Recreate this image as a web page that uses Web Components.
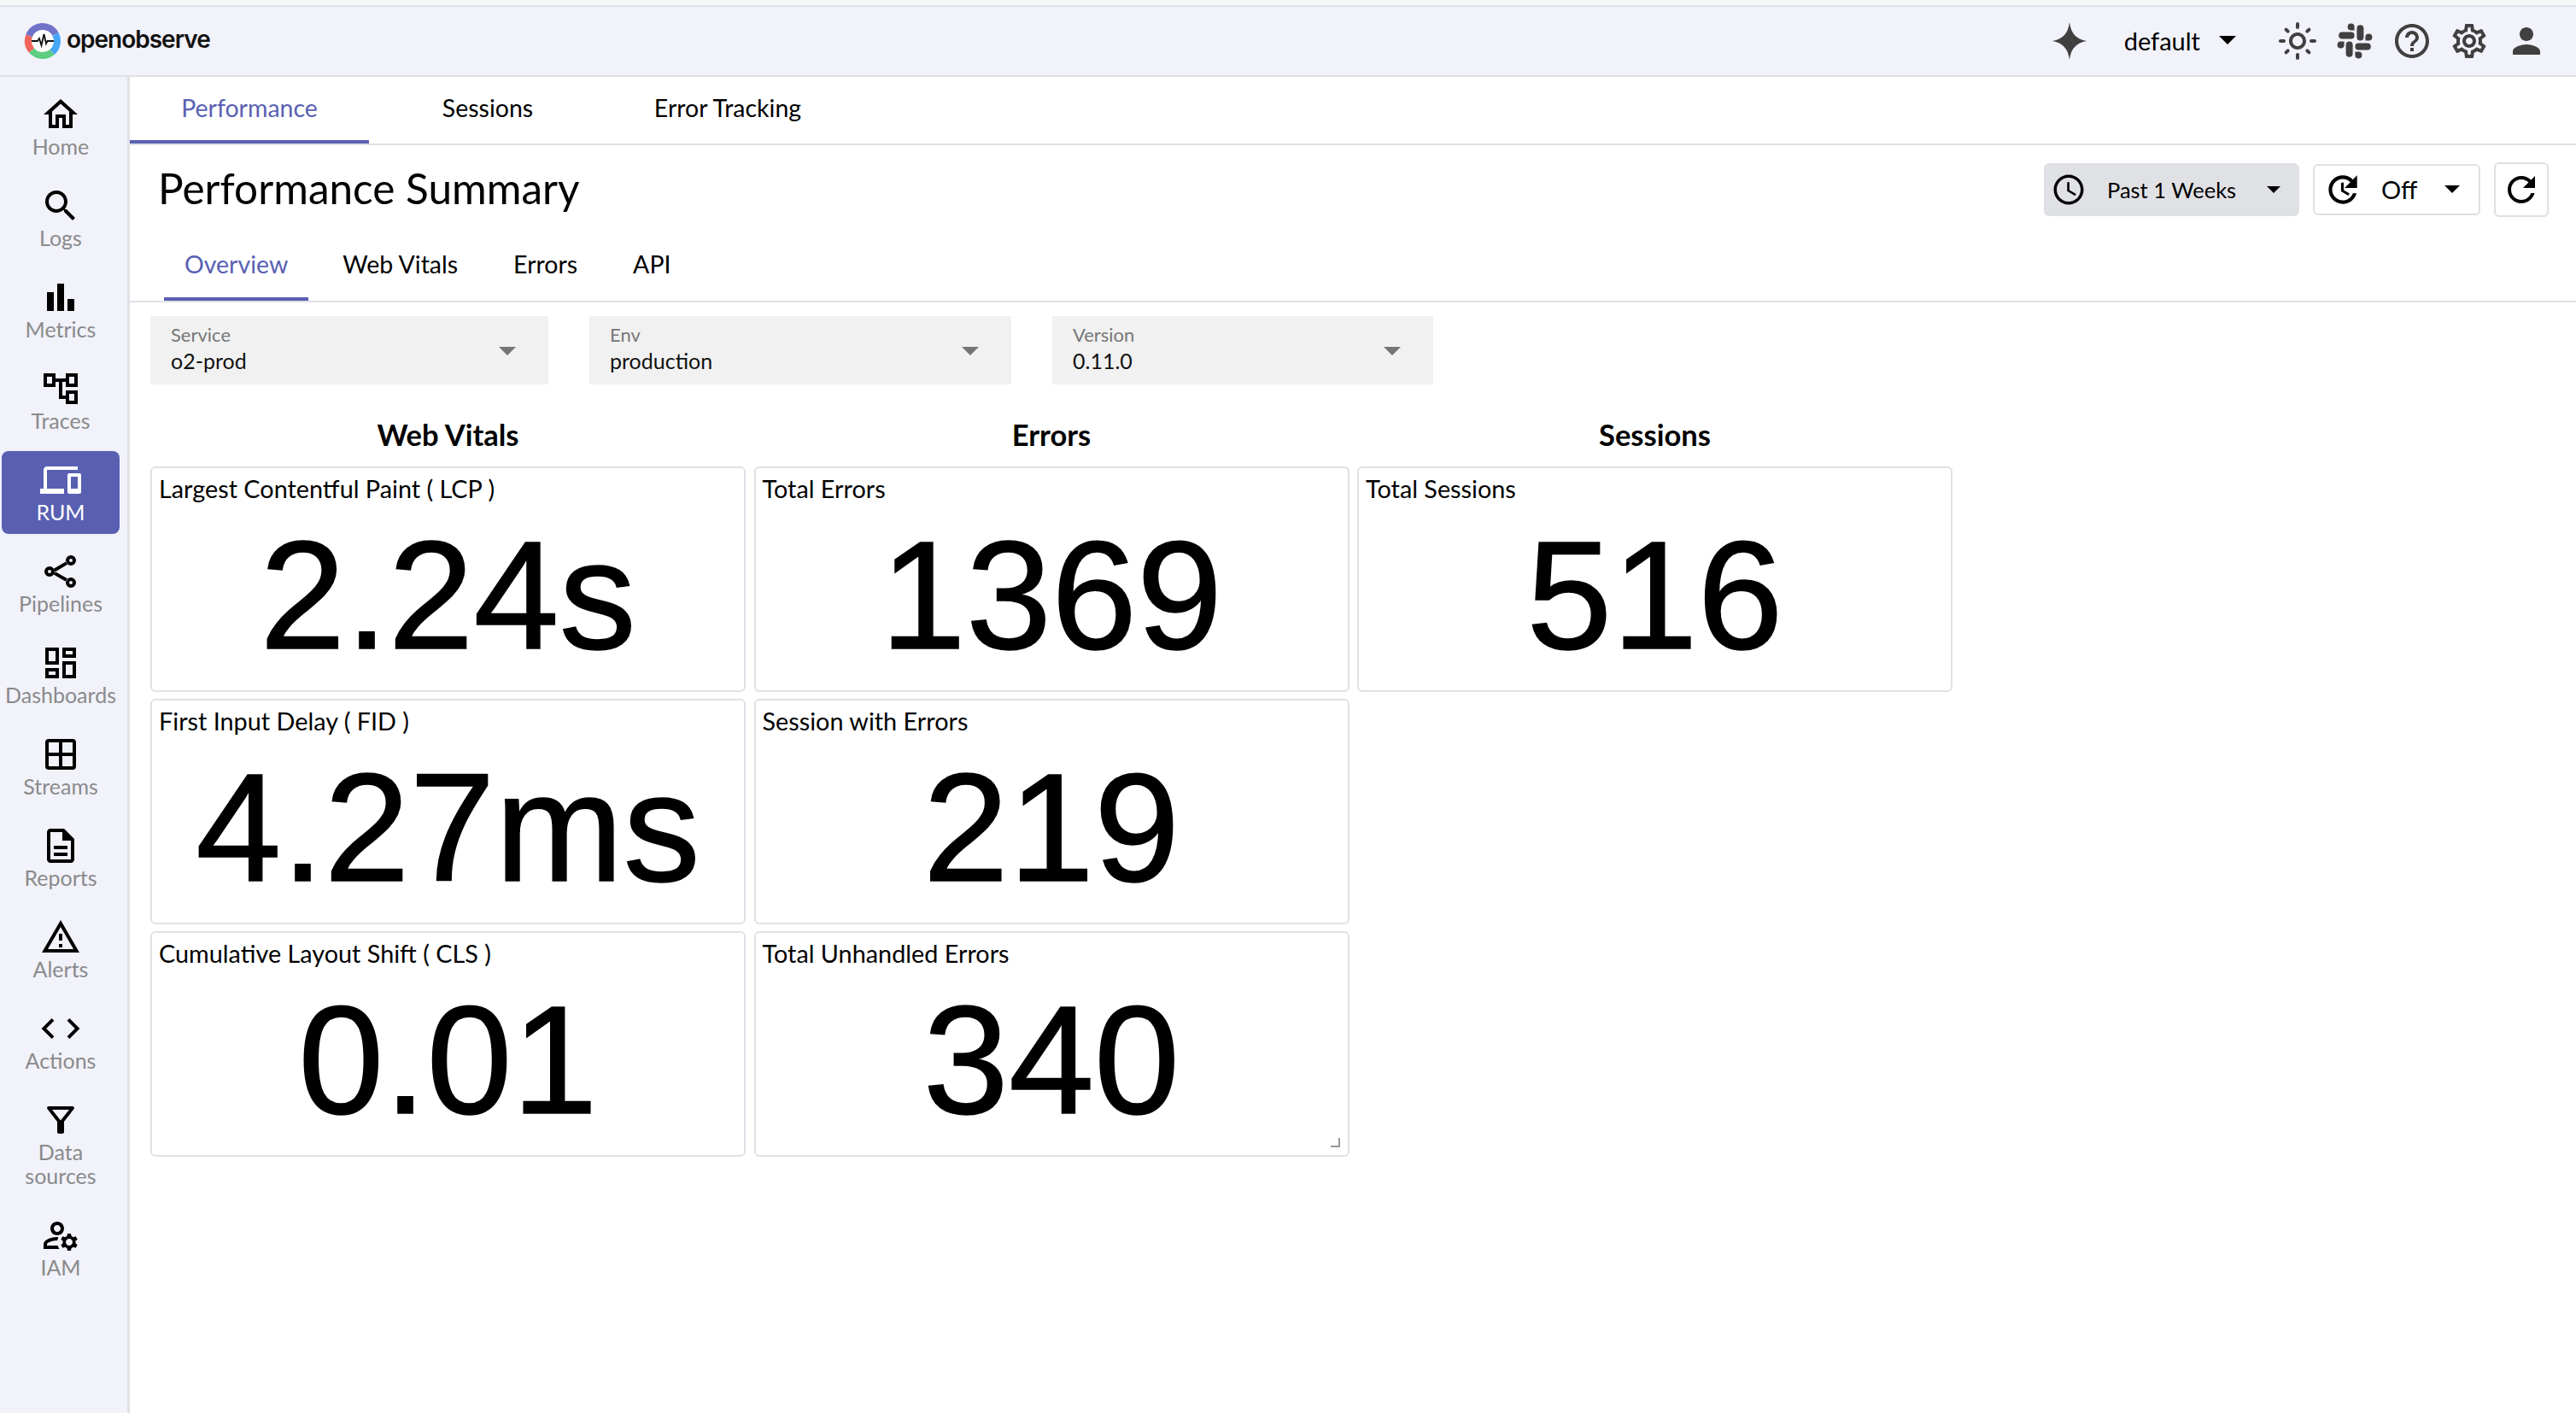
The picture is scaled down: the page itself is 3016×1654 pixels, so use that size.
<!DOCTYPE html>
<html><head><meta charset="utf-8"><title>OpenObserve</title>
<style>
html,body{margin:0;padding:0;background:#fff;}
body{font-family:"Lato","Noto Sans",sans-serif;color:#000;}
</style></head><body>
<oo-app></oo-app>
<script>
const P={
home:'M12 5.69l5 4.5V18h-2v-6H9v6H7v-7.81l5-4.5M12 3L2 12h3v8h6v-6h2v6h6v-8h3L12 3z',
search:'M15.5 14h-.79l-.28-.27C15.41 12.59 16 11.11 16 9.5 16 5.91 13.09 3 9.5 3S3 5.91 3 9.5 5.91 16 9.5 16c1.61 0 3.09-.59 4.23-1.57l.27.28v.79l5 4.99L20.49 19l-4.99-5zm-6 0C7.01 14 5 11.99 5 9.5S7.01 5 9.5 5 14 7.01 14 9.5 11.99 14 9.5 14z',
bars:'M4 9h4v11H4zM16 13h4v7h-4zM10 4h4v16h-4z',
traces:'M22 11V3h-7v3H9V3H2v8h7V8h2v10h4v3h7v-8h-7v3h-2V8h2v3h7zM7 9H4V5h3v4zm10 6h3v4h-3v-4zm0-10h3v4h-3V5z',
devices:'M4 6h18V4H4c-1.100 0-2 .9-2 2v11H0v3h14v-3H4V6zm19 2h-6c-.55 0-1 .45-1 1v10c0 .55.45 1 1 1h6c.55 0 1-.45 1-1V9c0-.55-.45-1-1-1zm-1 9h-4v-7h4v7z',
dash:'M19 5v2h-4V5h4M9 5v6H5V5h4m10 8v6h-4v-6h4M9 17v2H5v-2h4M21 3h-8v6h8V3zM11 3H3v10h8V3zm10 8h-8v10h8V11zm-10 4H3v6h8v-6z',
win:'M5 3h14a2 2 0 0 1 2 2v14a2 2 0 0 1-2 2H5a2 2 0 0 1-2-2V5a2 2 0 0 1 2-2zm0 2v6h6V5zm8 0v6h6V5zm6 8h-6v6h6zm-8 6v-6H5v6z',
doc:'M8 16h8v2H8zm0-4h8v2H8zm6-10H6c-1.100 0-2 .9-2 2v16c0 1.100.89 2 1.990 2H18c1.100 0 2-.9 2-2V8l-6-6zm4 18H6V4h7v5h5v11z',
warn:'M12 5.990L19.530 19H4.470L12 5.990M12 2L1 21h22L12 2zm1 14h-2v2h2v-2zm0-6h-2v4h2v-4z',
code:'M8.200 16.600L3.600 12 8.200 7.400 6.800 6l-6 6 6 6 1.400-1.400zM15.800 16.600L20.400 12 15.800 7.400 17.200 6l6 6-6 6-1.400-1.400z',
filter:'M7 6h10l-5.010 6.300L7 6zm-2.750-.39C6.270 8.200 10 13 10 13v6c0 .55.45 1 1 1h2c.55 0 1-.45 1-1v-6s3.720-4.800 5.740-7.390c.51-.66.04-1.610-.79-1.610H5.040c-.83 0-1.300.95-.79 1.610z',
iam:'M4 18v-.65c0-.34.16-.66.41-.81C6.100 15.530 8.030 15 10 15c.03 0 .05 0 .08.01.1-.7.3-1.370.59-1.980-.22-.02-.44-.03-.67-.03-2.420 0-4.680.67-6.610 1.820-.88.52-1.390 1.500-1.390 2.530V20h9.260c-.42-.6-.75-1.280-.97-2H4zm6-6c2.210 0 4-1.790 4-4s-1.790-4-4-4-4 1.790-4 4 1.790 4 4 4zm0-6c1.100 0 2 .9 2 2s-.9 2-2 2-2-.9-2-2 .9-2 2-2zm10.750 10c0-.22-.03-.42-.06-.63l1.140-1.010-1-1.730-1.450.49c-.32-.27-.68-.48-1.080-.63L18 11h-2l-.3 1.490c-.4.15-.76.36-1.080.63l-1.450-.49-1 1.730 1.140 1.010c-.03.21-.06.41-.06.63s.03.42.06.63l-1.140 1.010 1 1.730 1.450-.49c.32.27.68.48 1.080.63L16 21h2l.3-1.490c.4-.15.76-.36 1.080-.63l1.450.49 1-1.730-1.140-1.010c.03-.21.06-.41.06-.63zM17 18c-1.100 0-2-.9-2-2s.9-2 2-2 2 .9 2 2-.9 2-2 2z',
star:'M12 1C12.800 7.500 16 11 22 12 16 13 12.800 16.500 12 23 11.200 16.500 8 13 2 12 8 11 11.200 7.500 12 1z',
sun:'M12 9c1.650 0 3 1.350 3 3s-1.350 3-3 3-3-1.350-3-3 1.350-3 3-3m0-2c-2.760 0-5 2.240-5 5s2.240 5 5 5 5-2.240 5-5-2.240-5-5-5zM2 13h2c.55 0 1-.45 1-1s-.45-1-1-1H2c-.55 0-1 .45-1 1s.45 1 1 1zm18 0h2c.55 0 1-.45 1-1s-.45-1-1-1h-2c-.55 0-1 .45-1 1s.45 1 1 1zM11 2v2c0 .55.45 1 1 1s1-.45 1-1V2c0-.55-.45-1-1-1s-1 .45-1 1zm0 18v2c0 .55.45 1 1 1s1-.45 1-1v-2c0-.55-.45-1-1-1s-1 .45-1 1zM5.990 4.580c-.39-.39-1.030-.39-1.410 0-.39.39-.39 1.030 0 1.410l1.060 1.060c.39.39 1.030.39 1.410 0s.39-1.030 0-1.410L5.990 4.580zm12.370 12.370c-.39-.39-1.030-.39-1.410 0-.39.39-.39 1.030 0 1.410l1.060 1.060c.39.39 1.030.39 1.410 0 .39-.39.39-1.030 0-1.410l-1.060-1.060zm1.060-10.960c.39-.39.39-1.030 0-1.410-.39-.39-1.030-.39-1.410 0l-1.060 1.060c-.39.39-.39 1.030 0 1.410s1.030.39 1.410 0l1.060-1.060zM7.050 18.360c.39-.39.39-1.030 0-1.410-.39-.39-1.030-.39-1.410 0l-1.060 1.060c-.39.39-.39 1.030 0 1.410s1.030.39 1.410 0l1.060-1.060z',
slack:'M5.800 14.200a2 2 0 1 1-2-2h2zM6.800 14.200a2 2 0 0 1 4 0v5.200a2 2 0 0 1-4 0zM9.800 5.800a2 2 0 1 1 2-2v2zM9.800 6.800a2 2 0 0 1 0 4H4.600a2 2 0 0 1 0-4zM18.200 9.800a2 2 0 1 1 2 2h-2zM17.200 9.800a2 2 0 0 1-4 0V4.600a2 2 0 0 1 4 0zM14.200 18.200a2 2 0 1 1-2 2v-2zM14.200 17.200a2 2 0 0 1 0-4h5.200a2 2 0 0 1 0 4z',
help:'M11 18h2v-2h-2v2zm1-16C6.480 2 2 6.480 2 12s4.480 10 10 10 10-4.480 10-10S17.520 2 12 2zm0 18c-4.410 0-8-3.590-8-8s3.590-8 8-8 8 3.590 8 8-3.590 8-8 8zm0-14c-2.210 0-4 1.790-4 4h2c0-1.100.9-2 2-2s2 .9 2 2c0 2-3 1.750-3 5h2c0-2.250 3-2.500 3-5 0-2.210-1.790-4-4-4z',
gear:'M19.430 12.980c.04-.32.07-.64.07-.98 0-.34-.03-.66-.07-.98l2.110-1.650c.19-.15.24-.42.12-.64l-2-3.460c-.09-.16-.26-.25-.44-.25-.06 0-.12.01-.17.03l-2.490 1c-.52-.4-1.080-.73-1.690-.98l-.38-2.650C14.460 2.180 14.250 2 14 2h-4c-.25 0-.46.18-.49.42l-.38 2.650c-.61.25-1.170.59-1.690.98l-2.490-1c-.06-.02-.12-.03-.18-.03-.17 0-.34.09-.43.25l-2 3.460c-.13.22-.07.49.12.64l2.110 1.650c-.04.32-.07.65-.07.98 0 .33.03.66.07.98l-2.110 1.650c-.19.15-.24.42-.12.64l2 3.460c.09.16.26.25.44.25.06 0 .12-.01.17-.03l2.490-1c.52.4 1.080.73 1.690.98l.38 2.650c.03.24.24.42.49.42h4c.25 0 .46-.18.49-.42l.38-2.650c.61-.25 1.170-.59 1.690-.98l2.490 1c.06.02.12.03.18.03.17 0 .34-.09.43-.25l2-3.460c.12-.22.07-.49-.12-.64l-2.110-1.650zm-1.980-1.710c.04.31.05.52.05.73 0 .21-.02.43-.05.73l-.14 1.130.89.7 1.080.84-.7 1.210-1.270-.51-1.040-.42-.9.68c-.43.32-.84.56-1.250.73l-1.060.43-.16 1.130-.2 1.350h-1.400l-.19-1.350-.16-1.130-1.060-.43c-.43-.18-.83-.41-1.230-.71l-.91-.7-1.060.43-1.270.51-.7-1.210 1.080-.84.89-.7-.14-1.130c-.03-.31-.05-.54-.05-.74s.02-.43.05-.73l.14-1.130-.89-.7-1.080-.84.7-1.210 1.270.51 1.040.42.9-.68c.43-.32.84-.56 1.250-.73l1.060-.43.16-1.130.2-1.350h1.390l.19 1.350.16 1.130 1.060.43c.43.18.83.41 1.230.71l.91.7 1.060-.43 1.270-.51.7 1.210-1.070.85-.89.7.14 1.130zM12 8c-2.210 0-4 1.790-4 4s1.790 4 4 4 4-1.790 4-4-1.790-4-4-4zm0 6c-1.100 0-2-.9-2-2s.9-2 2-2 2 .9 2 2-.9 2-2 2z',
person:'M12 12c2.210 0 4-1.790 4-4s-1.790-4-4-4-4 1.790-4 4 1.790 4 4 4zm0 2c-2.670 0-8 1.340-8 4v2h16v-2c0-2.660-5.330-4-8-4z',
clock:'M11.990 2C6.470 2 2 6.480 2 12s4.470 10 9.990 10C17.520 22 22 17.520 22 12S17.520 2 11.990 2zM12 20c-4.420 0-8-3.580-8-8s3.580-8 8-8 8 3.580 8 8-3.580 8-8 8zm.5-13H11v6l5.250 3.150.75-1.230-4.500-2.670z',
refresh:'M17.650 6.350C16.200 4.900 14.210 4 12 4c-4.420 0-7.990 3.580-7.990 8s3.570 8 7.990 8c3.730 0 6.840-2.550 7.730-6h-2.080c-.82 2.330-3.040 4-5.650 4-3.310 0-6-2.690-6-6s2.690-6 6-6c1.660 0 3.140.69 4.220 1.780L13 11h7V4l-2.350 2.350z',
update:'M17.650 6.350C16.200 4.900 14.210 4 12 4c-4.420 0-7.990 3.580-7.990 8s3.570 8 7.990 8c3.730 0 6.840-2.550 7.730-6h-2.080c-.82 2.330-3.040 4-5.650 4-3.310 0-6-2.690-6-6s2.690-6 6-6c1.660 0 3.140.69 4.220 1.780L13 11h7V4l-2.350 2.350zM11 8h1.500v4.200l3.300 2-.75 1.200L11 13z',
share:'M5.500 9a3 3 0 1 1 0 6 3 3 0 0 1 0-6zm0 2a1 1 0 1 0 0 2 1 1 0 0 0 0-2zM18 2.500a3 3 0 1 1 0 6 3 3 0 0 1 0-6zm0 2a1 1 0 1 0 0 2 1 1 0 0 0 0-2zM18 15.500a3 3 0 1 1 0 6 3 3 0 0 1 0-6zm0 2a1 1 0 1 0 0 2 1 1 0 0 0 0-2zM7.900 10.400l7.300-4.300 1 1.700-7.300 4.300zM8.900 12.100l7.300 4.200-1 1.700-7.300-4.200z'
};
function def(name,css,html){
  customElements.define(name,class extends HTMLElement{
    constructor(){super();this.attachShadow({mode:'open'});}
    connectedCallback(){
      const a=n=>this.getAttribute(n)||'';
      this.shadowRoot.innerHTML='<style>'+css+'</style>'+(typeof html==='function'?html(a,this):html);
    }
  });
}
def('oo-icon',':host{display:inline-flex;width:var(--s,48px);height:var(--s,48px);flex:none;color:inherit}svg{width:100%;height:100%;fill:currentColor;display:block}',
  a=>`<svg viewBox="0 0 24 24"><path fill-rule="evenodd" d="${P[a('name')]}"/></svg>`);
def('oo-caret',':host{display:inline-block;flex:none;width:0;height:0;border-left:var(--c,10px) solid transparent;border-right:var(--c,10px) solid transparent;border-top:calc(var(--c,10px)) solid currentColor}','');
def('oo-logo',`:host{display:flex;align-items:center;gap:6px}
  svg{width:44px;height:44px;display:block}
  span{font:600 28px/1 "Inter",sans-serif;letter-spacing:-1px;color:#111;margin-top:-4px}`,
  `<svg viewBox="0 0 44 44"><circle cx="22" cy="22" r="21" fill="#fff"/>
  <g fill="none" stroke-width="8"><path d="M6 16A17 17 0 0 1 37 14" stroke="#7173c8"/><path d="M37 14A17 17 0 0 1 33 35" stroke="#46a6f6"/><path d="M33 35A17 17 0 0 1 9 33" stroke="#5dcd7f"/><path d="M9 33A17 17 0 0 1 6 16" stroke="#f0645a"/></g>
  <path d="M9 22h7l2-3 2.500 8 3-13 2.500 11 1.500-3H35" fill="none" stroke="#111" stroke-width="1.800"/></svg><span><slot></slot></span>`);
def('oo-header',`:host{display:flex;box-sizing:border-box;height:82px;background:#f1f2fa;border-bottom:2px solid #e0e1e7;align-items:center;padding:0 34px 0 28px;justify-content:space-between}
  .r{display:flex;align-items:center;color:#404040}
  .ns{display:flex;align-items:center;margin:-2px 48px 0 40px;font-size:29px;color:#000;gap:22px}
  .ic{display:flex;gap:19px}`,
  `<oo-logo>openobserve</oo-logo><div class="r"><oo-icon name="star"></oo-icon><div class="ns"><span>default</span><oo-caret></oo-caret></div><div class="ic"><oo-icon name="sun"></oo-icon><oo-icon name="slack"></oo-icon><oo-icon name="help"></oo-icon><oo-icon name="gear"></oo-icon><oo-icon name="person"></oo-icon></div></div>`);
def('oo-nav-item',`:host{display:flex;flex-direction:column;align-items:center;box-sizing:border-box;width:138px;padding:10px 0 12px;border-radius:8px;color:#8a8a8a;text-align:center;font-size:25px;line-height:28px}
  :host([active]){background:#5960b2;color:#fff}
  oo-icon{color:#000;margin-bottom:-1px;--s:48px} :host([active]) oo-icon{color:#fff}`,
  a=>`<oo-icon name="${a('icon')}"></oo-icon><slot></slot>`);
def('oo-sidebar',`:host{display:flex;flex-direction:column;box-sizing:border-box;width:152px;flex:none;background:#f1f2fa;border-right:3px solid #e0e1e7;padding:10px 0 0 2px;gap:10px}`,
 `<oo-nav-item icon="home">Home</oo-nav-item><oo-nav-item icon="search">Logs</oo-nav-item><oo-nav-item icon="bars">Metrics</oo-nav-item><oo-nav-item icon="traces">Traces</oo-nav-item><oo-nav-item icon="devices" active>RUM</oo-nav-item><oo-nav-item icon="share">Pipelines</oo-nav-item><oo-nav-item icon="dash">Dashboards</oo-nav-item><oo-nav-item icon="win">Streams</oo-nav-item><oo-nav-item icon="doc">Reports</oo-nav-item><oo-nav-item icon="warn">Alerts</oo-nav-item><oo-nav-item icon="code">Actions</oo-nav-item><oo-nav-item icon="filter">Data<br>sources</oo-nav-item><oo-nav-item icon="iam">IAM</oo-nav-item>`);
def('oo-tab',`:host{display:flex;align-items:center;justify-content:center;box-sizing:border-box;font-size:28.500px;color:#000;border-bottom:4px solid transparent}
  :host([main]){padding-bottom:3px}
  :host([active]){color:#5960b2;border-bottom-color:#5960b2}`,'<slot></slot>');
def('oo-tabs',`:host{display:flex;box-sizing:border-box;border-bottom:2px solid #e0e1e7}
  :host([main]){height:80px} :host([sub]){height:84px;padding-left:40px;gap:15px}`,'<slot></slot>');
def('oo-btn',`:host{display:flex;align-items:center;box-sizing:border-box;height:62px;border:2px solid #dfe0e5;border-radius:6px;background:#fff;font-size:25.500px}
  :host([on]){background:#e0e1e5;}`,'<slot></slot>');
def('oo-toolbar',`:host{display:flex;box-sizing:border-box;height:100px;align-items:center;justify-content:space-between;padding:0 32px 0 33px}
  h1{font-size:49.500px;font-weight:400;margin:0}
  .t{display:flex;align-items:center;gap:16px;margin-top:3px}
  .a{padding:0 20px 0 6px;width:299px;--c:8px}.b{padding:0 22px 0 8px;width:196px;height:60px;--c:9.500px}.c{width:64px;height:64px;justify-content:center}
  .x{flex:1;margin-left:24px}.y{flex:1;margin-left:20px;font-size:29px}
  .a oo-icon{--s:42px}.b oo-icon{--s:50px}.c oo-icon{--s:48px}`,
 `<h1>Performance Summary</h1><div class="t">
 <oo-btn on class="a"><oo-icon name="clock"></oo-icon><span class="x">Past 1 Weeks</span><oo-caret></oo-caret></oo-btn>
 <oo-btn class="b"><oo-icon name="update"></oo-icon><span class="y">Off</span><oo-caret></oo-caret></oo-btn>
 <oo-btn class="c"><oo-icon name="refresh"></oo-icon></oo-btn></div>`);
def('oo-filter',`:host{display:flex;align-items:center;box-sizing:border-box;height:80px;background:#f1f1f1;padding:0 24px 4px}
  .l{flex:1;display:flex;flex-direction:column}
  .k{font-size:22px;line-height:28px;color:#777}.v{font-size:25px;line-height:32px;color:#111}
  oo-caret{color:#757575;margin:6px 14px 0 0}`,
  a=>`<div class="l"><span class="k">${a('label')}</span><span class="v"><slot></slot></span></div><oo-caret></oo-caret>`);
def('oo-card',`:host{display:flex;flex-direction:column;position:relative;box-sizing:border-box;height:264px;border:2px solid #e0e1e7;border-radius:6px;background:#fff;overflow:hidden}
  .t{font-size:28.800px;line-height:36px;padding:6px 8px 0}
  .n{flex:1;display:flex;align-items:center;justify-content:center;font:400 180px/1 "Liberation Sans",Arial,sans-serif;-webkit-text-stroke:1.500px #000;margin-top:-4px}
  .h{position:absolute;right:9px;bottom:9px;width:11px;height:11px;border-right:2px solid #999;border-bottom:2px solid #999;box-sizing:border-box;display:none}
  :host([handle]) .h{display:block}`,
  a=>`<div class="t">${a('title')}</div><div class="n"><slot></slot></div><div class="h"></div>`);
def('oo-dashboard',`:host{display:grid;grid-template-columns:repeat(3,697px);column-gap:9.500px;padding:0 0 0 24px;width:max-content}
  h2{font-size:34.500px;font-weight:700;text-align:center;margin:0;line-height:40px;padding:39px 0 17px}
  .c{display:grid;row-gap:8px;align-content:start}`,
 `<h2>Web Vitals</h2><h2>Errors</h2><h2>Sessions</h2>
 <div class="c"><oo-card title="Largest Contentful Paint ( LCP )">2.24s</oo-card><oo-card title="First Input Delay ( FID )">4.27ms</oo-card><oo-card title="Cumulative Layout Shift ( CLS )">0.01</oo-card></div>
 <div class="c"><oo-card title="Total Errors">1369</oo-card><oo-card title="Session with Errors">219</oo-card><oo-card title="Total Unhandled Errors" handle>340</oo-card></div>
 <div class="c"><oo-card title="Total Sessions">516</oo-card></div>`);
def('oo-main',`:host{display:block;flex:1;min-width:0;background:#fff}
  .f{display:flex;gap:48px;padding:16px 0 0 24px}
  .f oo-filter:nth-child(1){width:466px}.f oo-filter:nth-child(2){width:494px}.f oo-filter:nth-child(3){width:446px}`,
 `<oo-tabs main><oo-tab main active style="width:280px">Performance</oo-tab><oo-tab main style="width:278px">Sessions</oo-tab><oo-tab main style="width:284px">Error Tracking</oo-tab></oo-tabs>
 <oo-toolbar></oo-toolbar>
 <oo-tabs sub><oo-tab active style="padding:0 24px">Overview</oo-tab><oo-tab style="padding:0 25px">Web Vitals</oo-tab><oo-tab style="padding:0 25px">Errors</oo-tab><oo-tab style="padding:0 25px">API</oo-tab></oo-tabs>
 <div class="f"><oo-filter label="Service">o2-prod</oo-filter><oo-filter label="Env">production</oo-filter><oo-filter label="Version">0.11.0</oo-filter></div>
 <oo-dashboard></oo-dashboard>`);
def('oo-app',`:host{display:flex;flex-direction:column;height:1654px;overflow:hidden}
  .s{height:6px;background:#f5faf8;border-bottom:2px solid #e0e1e7;flex:none}
  .b{display:flex;flex:1;min-height:0}`,
 `<div class="s"></div><oo-header></oo-header><div class="b"><oo-sidebar></oo-sidebar><oo-main></oo-main></div>`);
</script>
</body></html>
